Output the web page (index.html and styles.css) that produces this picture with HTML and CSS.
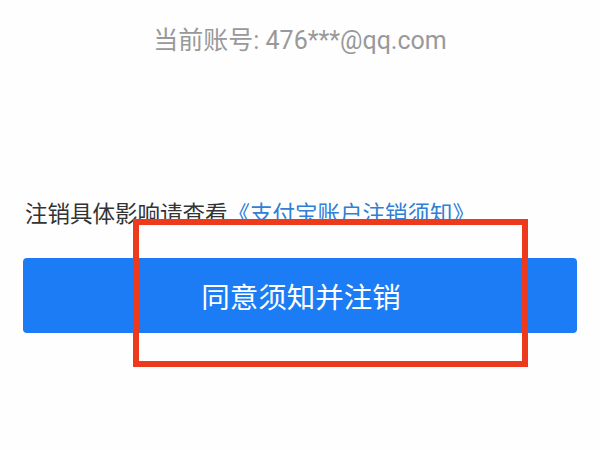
FILE: index.html
```html
<!DOCTYPE html>
<html lang="zh-CN">
<head>
<meta charset="utf-8">
<link rel="stylesheet" href="styles.css">
</head>
<body>
<div class="page">
  <div class="account">当前账号: 476***@qq.com</div>
  <div class="notice">注销具体影响请查看<span class="link">《支付宝账户注销须知》</span></div>
  <div class="btn">同意须知并注销</div>
  <div class="mark"></div>
</div>
</body>
</html>
```
FILE: styles.css
```css
html, body {
  margin: 0;
  padding: 0;
  background: #fefefe;
}
.page {
  position: relative;
  width: 600px;
  height: 450px;
  box-sizing: border-box;
  padding: 26px 23px 0;
  font-family: Roboto, "Noto Sans CJK SC", sans-serif;
}
.account {
  font-size: 25px;
  line-height: 30px;
  text-align: center;
  color: #999999;
}
.notice {
  margin-top: 143px;
  padding-left: 2px;
  font-size: 22.5px;
  line-height: 30px;
  color: #333333;
  white-space: nowrap;
}
.link {
  color: #2f7fd6;
}
.btn {
  margin-top: 29px;
  height: 75px;
  border-radius: 4px;
  background: #1b7cf5;
  color: #ffffff;
  font-size: 28.5px;
  display: flex;
  align-items: center;
  justify-content: center;
  padding-left: 2px;
}
.mark {
  position: absolute;
  left: 133px;
  top: 219px;
  width: 395px;
  height: 148px;
  box-sizing: border-box;
  border: 6px solid #ee3a1c;
}
```
